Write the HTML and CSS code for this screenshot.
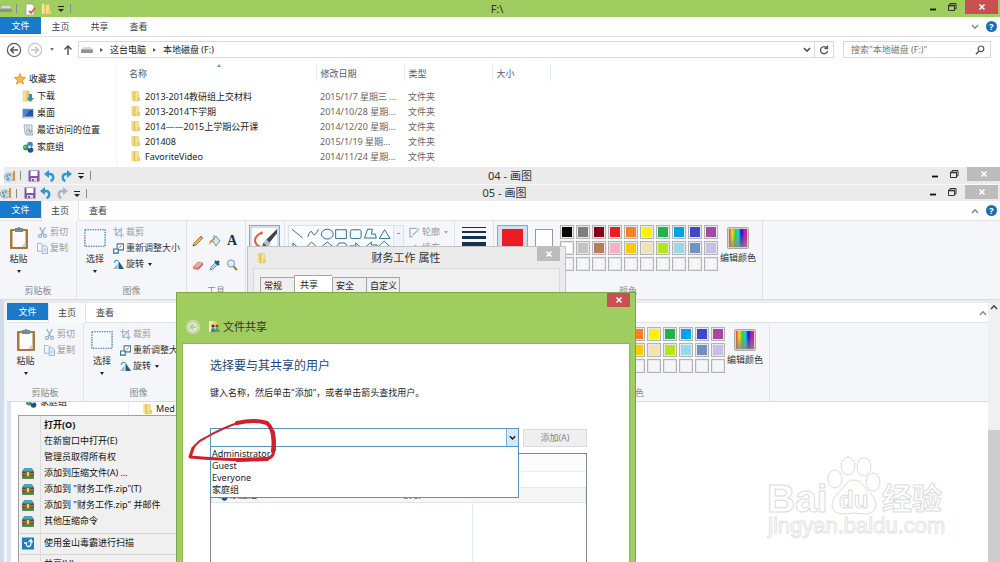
FILE: index.html
```html
<!DOCTYPE html>
<html lang="zh-CN">

<head>
    <meta charset="utf-8">
    <title>F:\</title>
    <meta name="viewport" content="width=device-width, initial-scale=1.0">
    <link rel="stylesheet" href="styles.css">
</head>

<body>
    <!-- icon sprites -->
    <svg class="sprites" width="0" height="0" aria-hidden="true">
        <defs>
            <linearGradient id="gold" x1="0" x2="1">
                <stop offset="0" stop-color="#fbf3b8" />
                <stop offset="1" stop-color="#e0bc50" />
            </linearGradient>
            <linearGradient id="rainbow" x1="0" x2="1">
                <stop offset="0" stop-color="#e0453a" />
                <stop offset=".18" stop-color="#f0e020" />
                <stop offset=".36" stop-color="#30d040" />
                <stop offset=".52" stop-color="#20d0d8" />
                <stop offset=".7" stop-color="#2018c8" />
                <stop offset=".85" stop-color="#b020c8" />
                <stop offset="1" stop-color="#e02060" />
            </linearGradient>
            <linearGradient id="fade" x1="0" x2="0" y1="0" y2="1">
                <stop offset=".3" stop-color="#888" stop-opacity="0" />
                <stop offset="1" stop-color="#888" stop-opacity=".75" />
            </linearGradient>
        </defs>
        <symbol id="i-folder" viewBox="0 0 12 12">
            <path d="M2 .5l4 1v10l-4-1z" fill="url(#gold)" />
            <path d="M6 1.500h3.500V11H6z" fill="#f5e39a" stroke="#dcbb5c" stroke-width=".5" />
            <path d="M8 7h3v4H8z" fill="#ebcf70" />
        </symbol>
        <symbol id="i-drive" viewBox="0 0 12 8">
            <path d="M2.500 1h7L12 4H0z" fill="#dadada" />
            <rect x="0" y="3.500" width="12" height="3.500" rx="1" fill="#909090" />
            <rect x="8.500" y="5" width="2" height="1" fill="#6ec25a" />
        </symbol>
        <symbol id="i-doc" viewBox="0 0 12 12">
            <path d="M2 1h6l2 2v9H2z" fill="#fff" stroke="#999" stroke-width=".7" />
            <path d="M5 8l2 2 4-5" fill="none" stroke="#e06030" stroke-width="1.800" />
        </symbol>
        <symbol id="i-star" viewBox="0 0 12 12">
            <path d="M6 .5l1.600 3.600 4 .4-3 2.700.9 3.900L6 9l-3.500 2.100.9-3.900-3-2.700 4-.4z" fill="#f8b84a" stroke="#d98620" stroke-width=".7" />
        </symbol>
        <symbol id="i-down" viewBox="0 0 12 12">
            <path d="M1 1h6v10H1z" fill="url(#gold)" stroke="#d5ae45" stroke-width=".5" />
            <path d="M7 4h3v4h2l-3.500 4L5 8h2z" fill="#2f8ad0" />
        </symbol>
        <symbol id="i-desktop" viewBox="0 0 12 12">
            <rect x="0" y="1.500" width="12" height="10" fill="#c4d0de" />
            <rect x="1" y="2.500" width="10" height="7" fill="#2356a8" />
            <path d="M1 2.500h7L3 9.500H1z" fill="#4c86cf" />
        </symbol>
        <symbol id="i-recent" viewBox="0 0 12 12">
            <path d="M2 1h8v8l1 2H4L3 9z" fill="#eef2f5" stroke="#8b98a2" stroke-width=".8" />
            <path d="M4 3h4M4 5h3" stroke="#8fa5b5" stroke-width=".7" />
            <circle cx="7" cy="7.500" r="2.600" fill="#d5e4ee" stroke="#7c93a5" stroke-width=".6" />
            <path d="M7 6v1.500h1.500" stroke="#456" stroke-width=".6" fill="none" />
        </symbol>
        <symbol id="i-home" viewBox="0 0 12 12">
            <circle cx="4" cy="6.500" r="3" fill="#3f9b58" />
            <circle cx="8" cy="3.500" r="2.800" fill="#3d83c8" />
            <circle cx="8.500" cy="9" r="2.800" fill="#1d4f94" />
            <circle cx="7.500" cy="6" r="1.400" fill="#e4f0f6" />
            <circle cx="3" cy="6" r="1" fill="#8ecf90" />
        </symbol>
        <symbol id="i-palette" viewBox="0 0 12 12">
            <ellipse cx="5" cy="7" rx="4.800" ry="4" fill="#b9dbe9" stroke="#6a9fb8" stroke-width=".7" />
            <circle cx="3" cy="6" r="1" fill="#d95a4a" />
            <circle cx="5.500" cy="5" r="1" fill="#58a55c" />
            <circle cx="4" cy="8.800" r="1" fill="#4470c8" />
            <path d="M9 1l2 0v10H9z" fill="#e69138" />
        </symbol>
        <symbol id="i-save" viewBox="0 0 12 12">
            <path d="M.5.5h11v11H.5z" fill="#7e57a8" />
            <path d="M2.500 1h7v5h-7z" fill="#fff" />
            <path d="M3 8h6v3H3z" fill="#e3d8ee" />
            <path d="M4 9h2v2H4z" fill="#7e57a8" />
        </symbol>
        <symbol id="i-undo" viewBox="0 0 12 12">
            <path d="M3 4h3.500a3.600 3.600 0 0 1 0 7" fill="none" stroke="currentColor" stroke-width="2.400" />
            <path d="M0 4L5 0v8z" fill="currentColor" />
        </symbol>
        <symbol id="i-chev" viewBox="0 0 8 6">
            <path d="M1 1l3 3.200L7 1" fill="none" stroke="currentColor" stroke-width="1.500" />
        </symbol>
        <symbol id="i-min" viewBox="0 0 10 10">
            <path d="M2 7.500h6" stroke="#111" stroke-width="1.800" />
        </symbol>
        <symbol id="i-restore" viewBox="0 0 10 10">
            <path d="M3 3V1.500h6V7H7.500" fill="none" stroke="#333" />
            <path d="M1.500 3.500h6v5h-6z" fill="none" stroke="#333" />
            <path d="M1 3.500h7" stroke="#333" stroke-width="1.600" />
        </symbol>
        <symbol id="i-x" viewBox="0 0 8 8">
            <path d="M1.500 1.500l5 5M6.500 1.500l-5 5" stroke="#fff" stroke-width="1.500" />
        </symbol>
        <symbol id="i-back" viewBox="0 0 16 16">
            <circle cx="8" cy="8" r="6.600" fill="none" stroke="currentColor" stroke-width="1.200" />
            <path d="M12 8H5M8 4.800L4.800 8 8 11.200" fill="none" stroke="currentColor" stroke-width="1.600" />
        </symbol>
        <symbol id="i-clip" viewBox="0 0 20 24">
            <rect x="1" y="3" width="18" height="20" rx="1" fill="#a9783c" />
            <path d="M3.500 5h13v16h-13z" fill="#fbfcfd" />
            <path d="M12 21l4.500-5v5z" fill="#c9d3dd" />
            <path d="M6 2h2.500a1.600 1.600 0 0 1 3 0H14v4H6z" fill="#788896" />
        </symbol>
        <symbol id="i-cut" viewBox="0 0 12 12">
            <path d="M3 0l4.500 8.500M9 0L4.500 8.500" stroke="#8fabc8" stroke-width="1.300" fill="none" />
            <circle cx="3.300" cy="9.600" r="1.700" fill="none" stroke="#8fabc8" stroke-width="1.200" />
            <circle cx="8.700" cy="9.600" r="1.700" fill="none" stroke="#8fabc8" stroke-width="1.200" />
        </symbol>
        <symbol id="i-copy" viewBox="0 0 12 12">
            <path d="M.5.5h4l2 2V9h-6z" fill="#f2f7fc" stroke="#9bb2cc" />
            <path d="M5.500 3h4l2 2v6.500h-6z" fill="#e6eff8" stroke="#9bb2cc" />
            <path d="M7 6.500h3M7 8.500h3" stroke="#9bb2cc" stroke-width=".7" />
        </symbol>
        <symbol id="i-select" viewBox="0 0 24 20">
            <rect x="1" y="1" width="22" height="18" fill="#f3f9fd" stroke="#29618d" stroke-width="1.200" stroke-dasharray="1.500 1.200" />
        </symbol>
        <symbol id="i-crop" viewBox="0 0 12 12">
            <path d="M3 0v9h9M0 3h9v9M3 9l7-8" fill="none" stroke="#9bb2c8" stroke-width="1.200" />
        </symbol>
        <symbol id="i-resize" viewBox="0 0 12 12">
            <path d="M4.500 1h7v6.500h-7z" fill="#fff" stroke="#4a7590" stroke-width="1.200" />
            <path d="M.7 6.500h5v4.500h-5z" fill="#fff" stroke="#2e6a8c" stroke-width="1.200" />
            <path d="M7 5l2.500-2" stroke="#4a7590" />
        </symbol>
        <symbol id="i-rotate" viewBox="0 0 12 12">
            <path d="M0 11h5V5z" fill="#9fb9c9" />
            <path d="M6 2v9h6z" fill="#17618f" />
            <path d="M1 4q2-4 5-2" fill="none" stroke="#3b9ac8" stroke-width="1.200" />
        </symbol>
        <symbol id="i-pencil" viewBox="0 0 12 12">
            <path d="M1 11l1-3 7-7 2 2-7 7z" fill="#e0b450" stroke="#7a5a2a" stroke-width=".6" />
            <path d="M9 1l2 2-1 1-2-2z" fill="#d67a6a" />
            <path d="M1 11l.5-1.500 1 1z" fill="#222" />
        </symbol>
        <symbol id="i-fill" viewBox="0 0 12 12">
            <path d="M3 5l4-4 4 5-4 5z" fill="#d4e4f0" stroke="#54789a" stroke-width=".8" />
            <path d="M4 5q-4-1-3.500 5Q2 7 5 6z" fill="#e09048" />
            <path d="M5 0v5" stroke="#54789a" stroke-width=".8" />
        </symbol>
        <symbol id="i-eraser" viewBox="0 0 12 12">
            <path d="M1 8l5-5 5 1-5 5z" fill="#f0a8a0" stroke="#c26a62" stroke-width=".6" />
            <path d="M1 8v2l5 1V9z" fill="#d97d75" />
            <path d="M6 9v2l5-5V4z" fill="#c7655f" />
        </symbol>
        <symbol id="i-dropper" viewBox="0 0 12 12">
            <path d="M1 11l1-3 4-4 2 2-4 4z" fill="#b8d4e8" stroke="#4a7ba0" stroke-width=".7" />
            <path d="M6 2l4 4M7.500 4.500L10 2" stroke="#1d4f86" stroke-width="2.400" />
        </symbol>
        <symbol id="i-lens" viewBox="0 0 12 12">
            <circle cx="5" cy="4.500" r="3.600" fill="#dceefa" stroke="#7790a8" />
            <path d="M7.500 7.500L11 11" stroke="#a5713c" stroke-width="2" />
        </symbol>
        <symbol id="i-brush" viewBox="0 0 24 24">
            <path d="M0 0h24v24H0z" fill="#fff" />
            <path d="M10 4q-8 4-7 9 1 4 5 5-5 1-6 5" fill="none" stroke="#df6038" stroke-width="2" />
            <circle cx="9" cy="5" r="1.200" fill="#df6038" />
            <path d="M24 1L13 12l3 3 8-10z" fill="#3b4550" />
            <path d="M14 11l4 4-3 3-4-4z" fill="#b5bec7" />
            <path d="M11 14l4 4q-3 5-8 4 3-3 4-8z" fill="#46586c" />
        </symbol>
        <symbol id="i-rainbow" viewBox="0 0 22 22">
            <rect x=".5" y=".5" width="21" height="21" rx="1" fill="#d8cfcb" stroke="#b3a5a0" />
            <rect x="2" y="2" width="18" height="18" fill="url(#rainbow)" />
            <rect x="2" y="2" width="18" height="18" fill="url(#fade)" />
        </symbol>
        <symbol id="i-rar" viewBox="0 0 12 12">
            <path d="M2 .5h8l2 3.500H0z" fill="#45a8b8" />
            <rect x="0" y="3.500" width="12" height="1.500" fill="#2f7f94" />
            <rect x="0" y="5" width="12" height="3" fill="#b5603a" />
            <rect x="0" y="8" width="12" height="3.500" rx="1" fill="#4a8a50" />
            <path d="M0 5h12M0 8h12" stroke="#463020" stroke-width=".7" />
            <rect x="4.500" y="4" width="3" height="5" fill="#f0cf58" stroke="#6b4a20" stroke-width=".5" />
        </symbol>
        <symbol id="i-scan" viewBox="0 0 12 12">
            <rect width="12" height="12" fill="#1d7fb8" />
            <path d="M2 5.500h2.500v1.500q0 2.500 2.500 2t2-5.500M6.500 4.500l2.500-2.500 1.500 3" fill="none" stroke="#fff" stroke-width="1.300" />
        </symbol>
        <symbol id="i-users" viewBox="0 0 12 12">
            <path d="M1 0h8l1 2v9H1z" fill="url(#gold)" />
            <circle cx="5" cy="5" r="1.500" fill="#333" />
            <circle cx="9" cy="5" r="1.500" fill="#7c4a30" />
            <path d="M3 11q0-4 2-4t2.500 4z" fill="#4078c0" />
            <path d="M7 11q0-4 2-4t3 4z" fill="#58a060" />
        </symbol>
    </svg>

    <div class="screen">

        <!-- Explorer window -->
        <section class="explorer">
            <div class="titlebar titlebar-green">
                <div class="quick">
                    <svg class="ico"><use href="#i-drive" /></svg>
                    <i class="bar"></i>
                    <svg class="ico"><use href="#i-doc" /></svg>
                    <svg class="ico"><use href="#i-folder" /></svg>
                    <i class="drop"></i>
                    <i class="bar"></i>
                </div>
                <h1 class="title">F:\</h1>
                <div class="controls">
                    <button aria-label="最小化"><svg><use href="#i-min" /></svg></button>
                    <button aria-label="还原"><svg><use href="#i-restore" /></svg></button>
                    <button class="close close-red" aria-label="关闭"><svg><use href="#i-x" /></svg></button>
                </div>
            </div>
            <nav class="tabs">
                <button class="tab tab-file">文件</button>
                <button class="tab">主页</button>
                <button class="tab">共享</button>
                <button class="tab">查看</button>
                <div class="tabs-end">
                    <svg class="chev"><use href="#i-chev" /></svg>
                    <span class="help">?</span>
                </div>
            </nav>
            <div class="address-row">
                <button class="nav-btn" aria-label="后退"><svg><use href="#i-back" /></svg></button>
                <button class="nav-btn nav-off" aria-label="前进"><svg class="flip"><use href="#i-back" /></svg></button>
                <i class="drop drop-grey"></i>
                <svg class="up" viewBox="0 0 10 12"><path d="M5 11V2M1.500 5.500L5 2l3.500 3.500" fill="none" stroke="#555" stroke-width="1.500" /></svg>
                <div class="address">
                    <svg class="ico"><use href="#i-drive" /></svg>
                    <i class="crumb"></i>
                    <a href="#">这台电脑</a>
                    <i class="crumb"></i>
                    <a href="#">本地磁盘 (F:)</a>
                    <svg class="chev chev-dark"><use href="#i-chev" /></svg>
                    <button class="refresh" aria-label="刷新"><svg viewBox="0 0 10 10"><path d="M8 3A3.600 3.600 0 1 0 8.600 6M8.500.5v3h-3" fill="none" stroke="#555" stroke-width="1.300" /></svg></button>
                </div>
                <div class="search">
                    <input type="text" aria-label="搜索" placeholder='搜索"本地磁盘 (F:)"'>
                    <svg viewBox="0 0 10 10"><circle cx="6" cy="3.800" r="2.800" fill="none" stroke="#555" stroke-width="1.200" /><path d="M4 6L1 9.200" stroke="#555" stroke-width="1.500" /></svg>
                </div>
            </div>
            <div class="explorer-body">
                <ul class="side">
                    <li class="side-head"><svg class="ico"><use href="#i-star" /></svg>收藏夹</li>
                    <li><svg class="ico"><use href="#i-down" /></svg>下载</li>
                    <li><svg class="ico"><use href="#i-desktop" /></svg>桌面</li>
                    <li><svg class="ico"><use href="#i-recent" /></svg>最近访问的位置</li>
                    <li><svg class="ico"><use href="#i-home" /></svg>家庭组</li>
                </ul>
                <table class="files">
                    <thead>
                        <tr><th class="c-name">名称<i class="sort"></i></th><th class="c-date">修改日期</th><th class="c-type">类型</th><th class="c-size">大小</th></tr>
                    </thead>
                    <tbody>
                        <tr><td><svg class="ico"><use href="#i-folder" /></svg>2013-2014教研组上交材料</td><td>2015/1/7 星期三 ...</td><td>文件夹</td><td></td></tr>
                        <tr><td><svg class="ico"><use href="#i-folder" /></svg>2013-2014下学期</td><td>2014/10/28 星期...</td><td>文件夹</td><td></td></tr>
                        <tr><td><svg class="ico"><use href="#i-folder" /></svg>2014——2015上学期公开课</td><td>2014/12/20 星期...</td><td>文件夹</td><td></td></tr>
                        <tr><td><svg class="ico"><use href="#i-folder" /></svg>201408</td><td>2015/1/19 星期...</td><td>文件夹</td><td></td></tr>
                        <tr><td><svg class="ico"><use href="#i-folder" /></svg>FavoriteVideo</td><td>2014/11/24 星期...</td><td>文件夹</td><td></td></tr>
                    </tbody>
                </table>
            </div>
        </section>

        <!-- Paint 04, only its title bar shows -->
        <div class="titlebar titlebar-04">
            <div class="quick">
                <svg class="ico"><use href="#i-palette" /></svg>
                <i class="bar"></i>
                <svg class="ico"><use href="#i-save" /></svg>
                <svg class="ico undo"><use href="#i-undo" /></svg>
                <svg class="ico undo flip"><use href="#i-undo" /></svg>
                <i class="drop"></i>
                <i class="bar"></i>
            </div>
            <h2 class="title">04 - 画图</h2>
            <div class="controls">
                <button aria-label="最小化"><svg><use href="#i-min" /></svg></button>
                <button aria-label="还原"><svg><use href="#i-restore" /></svg></button>
                <button class="close" aria-label="关闭"><svg><use href="#i-x" /></svg></button>
            </div>
        </div>

        <!-- Paint 05 -->
        <section class="paint">
            <div class="titlebar titlebar-05">
                <div class="quick">
                    <svg class="ico"><use href="#i-palette" /></svg>
                    <i class="bar"></i>
                    <svg class="ico"><use href="#i-save" /></svg>
                    <svg class="ico undo"><use href="#i-undo" /></svg>
                    <svg class="ico undo undo-off flip"><use href="#i-undo" /></svg>
                    <i class="drop"></i>
                    <i class="bar"></i>
                </div>
                <h2 class="title">05 - 画图</h2>
                <div class="controls">
                    <button aria-label="最小化"><svg><use href="#i-min" /></svg></button>
                    <button aria-label="还原"><svg><use href="#i-restore" /></svg></button>
                    <button class="close" aria-label="关闭"><svg><use href="#i-x" /></svg></button>
                </div>
            </div>
            <nav class="tabs">
                <button class="tab tab-file">文件</button>
                <button class="tab tab-on">主页</button>
                <button class="tab">查看</button>
                <div class="tabs-end">
                    <svg class="chev flip-v"><use href="#i-chev" /></svg>
                    <span class="help">?</span>
                </div>
            </nav>
            <div class="ribbon">
                <div class="group g-clip">
                    <div class="tools">
                        <button class="big"><svg class="i-big"><use href="#i-clip" /></svg>粘贴<i class="drop"></i></button>
                        <div class="stack">
                            <button class="small off"><svg class="ico"><use href="#i-cut" /></svg>剪切</button>
                            <button class="small off"><svg class="ico"><use href="#i-copy" /></svg>复制</button>
                        </div>
                    </div>
                    <div class="caption">剪贴板</div>
                </div>
                <div class="group g-image">
                    <div class="tools">
                        <button class="big"><svg class="i-big"><use href="#i-select" /></svg>选择<i class="drop"></i></button>
                        <div class="stack">
                            <button class="small off"><svg class="ico"><use href="#i-crop" /></svg>裁剪</button>
                            <button class="small"><svg class="ico"><use href="#i-resize" /></svg>重新调整大小</button>
                            <button class="small"><svg class="ico"><use href="#i-rotate" /></svg>旋转<i class="drop"></i></button>
                        </div>
                    </div>
                    <div class="caption">图像</div>
                </div>
                <div class="group g-tools">
                    <div class="tool-grid">
                        <svg><use href="#i-pencil" /></svg>
                        <svg><use href="#i-fill" /></svg>
                        <span class="letter">A</span>
                        <svg><use href="#i-eraser" /></svg>
                        <svg><use href="#i-dropper" /></svg>
                        <svg><use href="#i-lens" /></svg>
                    </div>
                    <div class="caption">工具</div>
                </div>
                <div class="group g-brush">
                    <button class="brush" aria-label="刷子"><svg><use href="#i-brush" /></svg></button>
                </div>
                <div class="group g-shapes">
                    <div class="shapes">
                        <svg viewBox="0 0 104 32" fill="#f2fafd" stroke="#356c88">
                            <path d="M1 3l11 9M17 11q3-9 5-4t6-4" fill="none" />
                            <ellipse cx="37" cy="8" rx="6" ry="5" />
                            <path d="M45.500 3.500h11v9h-11z" />
                            <rect x="60.500" y="3.500" width="11" height="9" rx="2" />
                            <path d="M78 3h5l-1 5h4l1 4H75zM90 12.500l5.500-9 5.500 9z" />
                            <path d="M2 17v9h10zM21 16l6 6-6 6-6-6zM37 16l6 5-2 6h-8l-2-6zM46 21l3-4h6l3 4-3 5h-6zM60 20h6v-3l6 5-6 5v-3h-6zM76 21l6-5v3h6v5h-6v3zM95 15l6 6h-3v6h-6v-6h-3z" />
                        </svg>
                        <i class="shapes-bar"></i>
                    </div>
                    <div class="stack">
                        <button class="small off"><svg class="ico" viewBox="0 0 12 12"><path d="M1 1.500h8M1 1v10l3-.5M4 9l7-7" fill="none" stroke="#a2b4c4" stroke-width="1.400" /></svg>轮廓<i class="drop"></i></button>
                        <button class="small off"><svg class="ico" viewBox="0 0 12 12"><path d="M2 7l5-5 4 4-4 5z" fill="#c9d5df" stroke="#a2b4c4" /></svg>填充<i class="drop"></i></button>
                    </div>
                </div>
                <div class="group g-size">
                    <i class="line w1"></i><i class="line w2"></i><i class="line w3"></i><i class="line w4"></i>
                </div>
                <div class="group g-colors">
                    <div class="tools">
                        <button class="color-one" aria-label="颜色 1"></button>
                        <button class="color-two" aria-label="颜色 2"></button>
                        <div class="palette"></div>
                        <button class="big edit"><svg class="i-big"><use href="#i-rainbow" /></svg>编辑颜色</button>
                    </div>
                    <div class="caption">颜色</div>
                </div>
            </div>

            <div class="canvas">
                <!-- earlier capture pasted on the canvas -->
                <div class="pasted">
                    <nav class="tabs">
                        <button class="tab tab-file">文件</button>
                        <button class="tab tab-on">主页</button>
                        <button class="tab">查看</button>
                        <div class="tabs-end">
                            <svg class="chev flip-v"><use href="#i-chev" /></svg>
                        </div>
                    </nav>
                    <div class="ribbon">
                        <div class="group g-clip">
                            <div class="tools">
                                <button class="big"><svg class="i-big"><use href="#i-clip" /></svg>粘贴<i class="drop"></i></button>
                                <div class="stack">
                                    <button class="small off"><svg class="ico"><use href="#i-cut" /></svg>剪切</button>
                                    <button class="small off"><svg class="ico"><use href="#i-copy" /></svg>复制</button>
                                </div>
                            </div>
                            <div class="caption">剪贴板</div>
                        </div>
                        <div class="group g-image">
                            <div class="tools">
                                <button class="big"><svg class="i-big"><use href="#i-select" /></svg>选择<i class="drop"></i></button>
                                <div class="stack">
                                    <button class="small off"><svg class="ico"><use href="#i-crop" /></svg>裁剪</button>
                                    <button class="small"><svg class="ico"><use href="#i-resize" /></svg>重新调整大小</button>
                                    <button class="small"><svg class="ico"><use href="#i-rotate" /></svg>旋转<i class="drop"></i></button>
                                </div>
                            </div>
                            <div class="caption">图像</div>
                        </div>
                        <div class="group g-tools"></div>
                        <div class="group g-brush"></div>
                        <div class="group g-shapes"></div>
                        <div class="group g-size"></div>
                        <div class="group g-colors">
                            <div class="tools">
                                <button class="color-one" aria-label="颜色 1"></button>
                                <button class="color-two" aria-label="颜色 2"></button>
                                <div class="palette"></div>
                                <button class="big edit"><svg class="i-big"><use href="#i-rainbow" /></svg>编辑颜色</button>
                            </div>
                            <div class="caption">颜色</div>
                        </div>
                    </div>
                    <div class="pasted-body">
                        <div class="under">
                            <div class="under-side"><svg class="ico"><use href="#i-home" /></svg>家庭组</div>
                            <div class="under-file"><svg class="ico"><use href="#i-folder" /></svg>Med</div>
                        </div>
                        <ul class="menu">
                            <li class="strong">打开(O)</li>
                            <li>在新窗口中打开(E)</li>
                            <li>管理员取得所有权</li>
                            <li><svg class="ico"><use href="#i-rar" /></svg>添加到压缩文件(A) ...</li>
                            <li><svg class="ico"><use href="#i-rar" /></svg>添加到 "财务工作.zip"(T)</li>
                            <li><svg class="ico"><use href="#i-rar" /></svg>添加到 "财务工作.zip" 并邮件</li>
                            <li><svg class="ico"><use href="#i-rar" /></svg>其他压缩命令</li>
                            <li class="ruled"><svg class="ico"><use href="#i-scan" /></svg>使用金山毒霸进行扫描</li>
                            <li class="ruled">共享(H)</li>
                        </ul>
                    </div>
                </div>
                <div class="scroll">
                    <svg class="chev flip-v"><use href="#i-chev" /></svg>
                    <div class="thumb"></div>
                </div>
            </div>
        </section>

        <!-- Folder properties -->
        <section class="props">
            <div class="props-title">
                <svg class="ico"><use href="#i-folder" /></svg>
                <h2 class="title">财务工作 属性</h2>
                <button class="close" aria-label="关闭"><svg><use href="#i-x" /></svg></button>
            </div>
            <div class="props-body">
                <button class="ptab">常规</button>
                <button class="ptab ptab-on">共享</button>
                <button class="ptab">安全</button>
                <button class="ptab">自定义</button>
            </div>
        </section>

        <!-- File sharing dialog -->
        <section class="share">
            <div class="share-head">
                <button class="close close-red" aria-label="关闭"><svg><use href="#i-x" /></svg></button>
                <div class="share-name">
                    <svg class="share-back"><use href="#i-back" /></svg>
                    <svg class="ico"><use href="#i-users" /></svg>
                    <h2 class="title">文件共享</h2>
                </div>
            </div>
            <div class="share-body">
                <h3>选择要与其共享的用户</h3>
                <label for="user">键入名称，然后单击"添加"，或者单击箭头查找用户。</label>
                <div class="pick-row">
                    <div class="combo">
                        <select id="user">
                            <option></option>
                        </select>
                        <span class="combo-arrow"><svg class="chev"><use href="#i-chev" /></svg></span>
                        <ul class="options">
                            <li>Administrator</li>
                            <li>Guest</li>
                            <li>Everyone</li>
                            <li>家庭组</li>
                        </ul>
                    </div>
                    <button class="add" disabled>添加(A)</button>
                </div>
                <div class="people">
                    <div class="people-head"></div>
                    <div class="people-row"><span><svg class="ico"><use href="#i-home" /></svg>家庭组</span><span>读取</span></div>
                </div>
            </div>
        </section>

        <!-- red pen mark -->
        <svg class="mark" viewBox="0 0 94 46" fill="none" stroke="#cf202c" stroke-linecap="round" stroke-linejoin="round">
            <path d="M3 39Q6 25 18 20Q37 9 54 4" stroke-width="2" />
            <path d="M50 5Q68 1 80 5Q86 10 87 24L86 33" stroke-width="4" />
            <path d="M86 32Q88 38 80 41Q50 43 3 39L6 30" stroke-width="3" />
            <path d="M86 14L87 32M50 42L80 41" stroke-width="4" />
        </svg>

        <!-- watermark -->
        <svg class="logo" viewBox="0 0 190 90" fill="#fff" stroke="#dcdcdc" stroke-width="1">
            <ellipse cx="73" cy="30" rx="7" ry="9" />
            <ellipse cx="86" cy="17" rx="7" ry="9" />
            <ellipse cx="102" cy="18" rx="7" ry="9" />
            <ellipse cx="111" cy="33" rx="7" ry="9" />
            <path d="M92 31q7 0 11 8 11 9 11 17-1 9-11 9-10-2-22 0-10 0-11-9 0-7 11-17 4-8 11-8z" />
            <text x="5" y="63" class="logo-big">Bai</text>
            <text x="77" y="59" class="logo-du">du</text>
            <text x="120" y="60" class="logo-cn">经验</text>
            <text x="6" y="84" class="logo-url">jingyan.baidu.com</text>
        </svg>
    </div>

    <script src="script.js"></script>
</body>

</html>
```

FILE: styles.css
```css
* {
    box-sizing: border-box;
}

body {
    margin: 0;
    font-family: "Noto Sans", "Noto Sans CJK SC", sans-serif;
    font-size: 9px;
    line-height: 14px;
    color: #222;
    background-color: #fff;
}

button,
input,
select {
    font: inherit;
    color: inherit;
    margin: 0;
    padding: 0;
    border: none;
    background: none;
}

button {
    white-space: nowrap;
}

h1,
h2,
h3,
ul {
    margin: 0;
    padding: 0;
    font-weight: normal;
    list-style: none;
}

a {
    color: inherit;
    text-decoration: none;
}

svg {
    display: block;
    flex: none;
}

.sprites {
    position: absolute;
}

.screen {
    position: relative;
    display: flex;
    flex-direction: column;
    height: 100vh;
    overflow: hidden;
}

.ico {
    width: 12px;
    height: 12px;
}

.flip {
    transform: scaleX(-1);
}

.flip-v {
    transform: scaleY(-1);
}

.drop {
    flex: none;
    width: 0;
    border: 2px solid transparent;
    border-top: 3px solid #222;
    border-bottom: none;
}

.drop-grey {
    border-top-color: #777;
}

.chev {
    width: 8px;
    height: 6px;
    color: #888;
}

/* title bars */
.titlebar {
    display: flex;
    flex: none;
    position: relative;
    align-items: center;
    justify-content: space-between;
    background-color: #ebebeb;
}

.titlebar-green {
    height: 17px;
    background-color: #a0cd5f;
    padding-right: 2px;
}

.titlebar-04 {
    height: 18px;
    margin-left: 4px;
    border-bottom: 1px solid #f8f8f8;
}

.titlebar-05 {
    height: 16px;
    padding-right: 2px;
}

.title {
    font-size: 11px;
    line-height: 16px;
    color: #333;
}

.titlebar .title {
    position: absolute;
    left: 0;
    right: 6px;
    text-align: center;
}

.titlebar-04 .title {
    right: -16px;
}

.titlebar-05 .title {
    right: -9px;
}

.quick {
    display: flex;
    align-items: center;
    gap: 4px;
    height: 16px;
}

.quick .bar {
    width: 1px;
    height: 9px;
    margin-right: 3px;
    background-color: #8b8b8b;
}

.quick .drop {
    border-left-width: 3px;
    border-right-width: 3px;
    margin: 4px 2px 0;
    position: relative;
}

.quick .drop::before {
    content: "";
    position: absolute;
    top: -6px;
    left: -3px;
    width: 6px;
    height: 1px;
    background-color: #222;
}

.undo {
    color: #2f97d4;
}

.undo-off {
    color: #a7b5c6;
}

.controls {
    display: flex;
    position: relative;
    align-self: flex-start;
}

.controls button {
    width: 19px;
    height: 14px;
    display: flex;
    align-items: center;
    justify-content: center;
}

.controls svg {
    width: 10px;
    height: 10px;
}

.controls .close {
    width: 33px;
    margin-left: 4px;
}

.close {
    display: flex;
    align-items: center;
    justify-content: center;
    background-color: #bcbcbc;
}

.controls .close svg,
.close svg {
    width: 8px;
    height: 8px;
}

.controls .close-red,
.close-red {
    background-color: #c75050;
}

/* ribbon tabs */
.tabs {
    display: flex;
    flex: none;
    height: 20px;
    background-color: #fff;
    border-bottom: 1px solid #dfe2e6;
}

.tab {
    width: 38px;
    line-height: 18px;
    color: #444;
}

.tab-file {
    width: 41px;
    height: 17px;
    line-height: 17px;
    color: #fff;
    background-color: #1979ca;
}

.tab-on {
    height: 20px;
    border: 1px solid #dfe2e6;
    border-width: 0 1px;
    background-color: #f9fafb;
}

.tabs-end {
    display: flex;
    align-items: center;
    gap: 7px;
    margin-left: auto;
    padding-right: 3px;
}

.help {
    width: 11px;
    height: 11px;
    border-radius: 6px;
    line-height: 11px;
    font-weight: bold;
    text-align: center;
    color: #fff;
    background-color: #1c6fb5;
}

/* explorer */
.explorer {
    flex: none;
}

.explorer .tab:not(.tab-file) {
    width: 39px;
}

.address-row {
    display: flex;
    align-items: center;
    height: 26px;
    padding: 0 9px 1px 6px;
}

.nav-btn {
    width: 16px;
    height: 16px;
    margin-right: 5px;
    color: #555;
}

.nav-btn svg {
    width: 16px;
    height: 16px;
}

.nav-off {
    color: #c5c5c5;
    margin-right: 7px;
}

.up {
    width: 10px;
    height: 12px;
    margin: 0 5px 0 9px;
}

.address {
    display: flex;
    flex: 1;
    align-items: center;
    height: 17px;
    padding-left: 2px;
    border: 1px solid #d9d9d9;
    color: #222;
}

.address .crumb {
    border: 2px solid transparent;
    border-left: 3px solid #555;
    border-right: none;
    margin: 0 7px;
}

.address .chev {
    margin-left: auto;
    color: #444;
}

.refresh {
    width: 19px;
    height: 15px;
    margin-left: 3px;
    padding: 0 4px;
    border-left: 1px solid #d9d9d9;
}

.refresh svg {
    width: 10px;
    height: 10px;
}

.search {
    display: flex;
    align-items: center;
    width: 148px;
    height: 17px;
    margin-left: 9px;
    padding: 0 5px 0 7px;
    border: 1px solid #d9d9d9;
}

.search input {
    flex: 1;
    min-width: 0;
    height: 15px;
    outline: none;
}

.search input::placeholder {
    color: #777;
}

.search svg {
    width: 10px;
    height: 10px;
}

.explorer-body {
    display: flex;
    height: 104px;
}

.side {
    width: 117px;
    padding: 7px 0 0 22px;
    border-right: 1px solid #f2f5f8;
}

.side li {
    display: flex;
    align-items: center;
    gap: 3px;
    height: 17px;
    white-space: nowrap;
}

.side .side-head {
    margin-left: -8px;
}

.files {
    border-collapse: collapse;
    align-self: flex-start;
    margin-left: 12px;
    table-layout: fixed;
    width: 422px;
}

.files th {
    height: 18px;
    padding: 3px 0 0 4px;
    border-right: 1px solid #e3eef5;
    text-align: left;
    font-weight: normal;
    color: #4c607a;
}

.files .c-name {
    width: 187px;
    padding-left: 0;
    position: relative;
}

.c-date,
.c-type {
    width: 88px;
}

.sort {
    position: absolute;
    top: 1px;
    left: 88px;
    border: 2px solid transparent;
    border-top: none;
    border-bottom: 3px solid #5b9cc4;
}

.files td {
    height: 15px;
    padding: 0 0 0 4px;
    line-height: 15px;
    color: #666;
    white-space: nowrap;
}

.files tbody:before {
    content: "";
    display: block;
    height: 8px;
}

.files td:first-child {
    padding-left: 0;
    color: #222;
}

.files td .ico {
    float: left;
    margin: 1px 4px 0 0;
}

/* paint */
.paint {
    display: flex;
    flex: 1;
    flex-direction: column;
    min-height: 0;
}

.ribbon {
    display: flex;
    flex: none;
    height: 79px;
    background-color: #f4f6f9;
    border-bottom: 1px solid #d8dbe0;
}

.group {
    display: flex;
    flex: none;
    flex-direction: column;
    justify-content: space-between;
    position: relative;
    padding: 4px 0 1px;
    border-right: 1px solid #e0e3e8;
}

.g-clip {
    width: 77px;
}

.g-image {
    width: 110px;
}

.g-tools {
    width: 59px;
}

.g-brush {
    width: 39px;
    padding-left: 3px;
}

.ribbon .g-shapes {
    width: 170px;
    padding-left: 3px;
    flex-direction: row;
    justify-content: flex-start;
    gap: 5px;
}

.ribbon .g-size {
    width: 39px;
    padding: 6px 7px 0;
    justify-content: flex-start;
    gap: 3px;
}

.g-colors {
    width: 269px;
}

.tools {
    display: flex;
    align-items: flex-start;
}

.caption {
    text-align: center;
    color: #8a8a8a;
}

.big {
    display: flex;
    flex-direction: column;
    align-items: center;
    width: 37px;
    padding-top: 1px;
    color: #333;
}

.g-image .big {
    width: 36px;
}

.big .i-big {
    width: 22px;
    height: 24px;
    margin-bottom: 2px;
}

.big .drop {
    margin-top: 4px;
}

.stack {
    display: flex;
    flex-direction: column;
    align-items: flex-start;
    gap: 2px;
}

.small {
    display: flex;
    align-items: center;
    gap: 2px;
    height: 14px;
    color: #333;
}

.off {
    color: #999;
}

.off .drop {
    border-top-color: #aaa;
}

.small .drop {
    margin-left: 2px;
}

.small .ico {
    width: 11px;
    height: 11px;
}

.tool-grid {
    display: grid;
    grid-template-columns: repeat(3, 12px);
    gap: 12px 5px;
    padding: 10px 0 0 5px;
}

.tool-grid svg {
    width: 12px;
    height: 12px;
}

.letter {
    font: bold 14px/12px "Liberation Serif", serif;
    color: #1c2f4a;
    text-align: center;
}

.brush {
    display: flex;
    align-items: flex-start;
    width: 31px;
    height: 40px;
    padding: 2px;
    border: 1px solid #7fa8d6;
    background-color: #cfe0f3;
}

.brush svg {
    width: 25px;
    height: 25px;
}

.shapes {
    display: flex;
    justify-content: space-between;
    width: 116px;
    height: 50px;
    padding: 0 0 0 2px;
    border: 1px solid #dbe2ea;
    background-color: #fbfcfe;
}

.shapes svg {
    width: 102px;
    height: 32px;
}

.shapes-bar {
    width: 10px;
    border-left: 1px solid #dbe2ea;
    background: linear-gradient(#999, #999) 3px 7px / 3px 1px no-repeat #f0f3f7;
}

.line {
    background-color: #17314f;
}

.w1 {
    height: 1px;
}

.w2 {
    height: 2px;
}

.w3 {
    height: 3px;
}

.w4 {
    height: 4px;
}

.color-one,
.color-two {
    flex: none;
    width: 31px;
    height: 40px;
    margin-left: 3px;
    border: 1px solid #7fa8d6;
    background: linear-gradient(#eb1c24, #eb1c24) center 3px / 21px 20px no-repeat #cfe0f3;
}

.color-two {
    width: 18px;
    height: 20px;
    margin: 4px 7px 0;
    border-color: #999;
    background: #fff;
}

.palette {
    display: grid;
    grid-template-columns: repeat(10, 14px);
    gap: 2px;
}

.swatch {
    height: 14px;
    border: 1px solid #b4b4b4;
    box-shadow: inset 0 0 0 1px #e8e8e8;
}

.g-colors .edit {
    width: 40px;
    padding-top: 2px;
}

.edit .i-big {
    width: 22px;
    height: 22px;
}

/* canvas of paint 05 */
.canvas {
    display: flex;
    flex: 1;
    min-height: 0;
    padding-top: 3px;
    border-left: 4px solid #d0dbec;
    background-color: #e9ebee;
}

.pasted {
    display: flex;
    flex: 1;
    flex-direction: column;
    min-width: 0;
    border-left: 3px solid #f1f5fa;
    background-color: #fff;
}

.pasted .tabs-end {
    padding-right: 1px;
}

.pasted-body {
    flex: 1;
    min-height: 0;
    padding-left: 7px;
    border-left: 4px solid #dde5f1;
}

.under {
    display: flex;
    height: 13px;
    overflow: hidden;
}

.under-side,
.under-file {
    display: flex;
    align-items: center;
    gap: 3px;
    padding-left: 7px;
}

.under-side {
    width: 110px;
    height: 13px;
    margin-top: -7px;
}

.under-file {
    padding-left: 12px;
    border-left: 1px solid #eef2f6;
}

.menu {
    width: 200px;
    border: 1px solid #a0a0a0;
    padding: 1px 0;
    background: linear-gradient(90deg, #f0f0f0 21px, #dcdcdc 21px, #dcdcdc 22px, #f0f0f0 22px);
}

.menu li {
    display: flex;
    align-items: center;
    position: relative;
    height: 16px;
    padding-left: 25px;
    white-space: nowrap;
    color: #111;
}

.menu .ico {
    position: absolute;
    left: 3px;
    height: 13px;
}

.menu .strong {
    font-weight: bold;
}

.menu .ruled {
    height: 21px;
    border-top: 1px solid #d5d5d5;
    margin-top: 4px;
    padding-bottom: 2px;
}

.menu .ruled + .ruled {
    margin-top: 0;
}

.scroll {
    display: flex;
    flex-direction: column;
    align-items: center;
    justify-content: space-between;
    width: 12px;
    padding-top: 1px;
    background-color: #f0f0f0;
}

.scroll .chev {
    color: #444;
}

.thumb {
    width: 12px;
    height: 51%;
    background-color: #cdcdcd;
}

/* properties window */
.props {
    position: absolute;
    top: 246px;
    left: 247px;
    width: 319px;
    height: 60px;
    padding: 0 5px;
    border: 1px solid #c2c2c2;
    background-color: #ebebeb;
}

.props-title {
    display: flex;
    align-items: center;
    justify-content: space-between;
    height: 21px;
    padding-left: 2px;
}

.props-title .title {
    padding-left: 8px;
}

.props .close {
    width: 23px;
    height: 14px;
    align-self: flex-start;
}

.props-body {
    display: flex;
    align-items: flex-end;
    height: 26px;
    padding-left: 6px;
    border: 1px solid #d8d8d8;
    border-bottom: none;
    background-color: #f0f0f0;
}

.ptab {
    width: 34px;
    height: 17px;
    padding-left: 3px;
    border: 1px solid #a5a5a5;
    border-right: none;
    text-align: left;
    background-color: #efefef;
    color: #222;
}

.ptab-on {
    width: 38px;
    height: 19px;
    padding-left: 5px;
    background-color: #fff;
}

.ptab:last-child {
    border-right: 1px solid #a5a5a5;
}

/* sharing dialog */
.share {
    display: flex;
    flex-direction: column;
    position: absolute;
    top: 292px;
    bottom: 0;
    left: 176px;
    width: 460px;
    padding: 0 5px;
    border: 1px solid #7fa646;
    border-bottom: none;
    background-color: #a0cd5f;
}

.share-head {
    height: 50px;
    padding-left: 4px;
}

.share .close {
    width: 23px;
    height: 14px;
    margin-left: auto;
}

.share-name {
    display: flex;
    align-items: center;
    gap: 3px;
    height: 40px;
}

.share-back {
    width: 14px;
    height: 14px;
    margin-right: 5px;
    border-radius: 7px;
    color: #b3c79a;
    background-color: #dcebc6;
}

.share-body {
    flex: 1;
    padding: 14px 42px 0 27px;
    border: 1px solid #8fb854;
    border-bottom: none;
    background-color: #fff;
}

.share-body h3 {
    font-size: 12px;
    line-height: 16px;
    color: #1c4878;
}

.share-body label {
    display: block;
    margin-top: 12px;
    white-space: nowrap;
}

.pick-row {
    display: flex;
    align-items: center;
    justify-content: space-between;
    margin-top: 28px;
}

.combo {
    position: relative;
    width: 309px;
}

.combo select {
    display: block;
    width: 100%;
    height: 19px;
    padding: 0 18px 0 3px;
    border: 1px solid #5694b8;
    appearance: none;
    background-color: #fff;
}

.combo-arrow {
    display: flex;
    align-items: center;
    justify-content: center;
    position: absolute;
    top: 1px;
    right: 1px;
    width: 12px;
    height: 17px;
    border-left: 1px solid #7eb4d6;
    background-color: #d3e9f8;
    pointer-events: none;
}

.combo-arrow .chev {
    width: 7px;
    color: #111;
}

.options {
    position: absolute;
    top: 18px;
    left: 0;
    right: 0;
    padding: 1px 0 1px 1px;
    border: 1px solid #5694b8;
    background-color: #fff;
    line-height: 12px;
}

.add {
    width: 64px;
    height: 18px;
    border: 1px solid #dcdcdc;
    color: #888;
    background-color: #efefef;
}

.people {
    height: 120px;
    margin-top: 6px;
    border: 1px solid #828790;
    background: linear-gradient(#dcebf3, #dcebf3) 261px 0 / 1px 100% no-repeat;
}

.people-head {
    height: 18px;
    border-bottom: 1px solid #e8eef3;
    background-color: #fbfcfd;
}

.people-row {
    display: flex;
    align-items: center;
    height: 16px;
    margin-top: 15px;
    border: 1px solid #e3e6e8;
    background-color: #f5f6f6;
}

.people-row span {
    display: flex;
    align-items: center;
    gap: 2px;
    width: 262px;
    padding-left: 4px;
}

/* overlays */
.mark {
    position: absolute;
    top: 418px;
    left: 187px;
    width: 94px;
    height: 46px;
}

.logo {
    position: absolute;
    right: 48px;
    bottom: 23px;
    width: 190px;
    height: 90px;
    overflow: visible;
}

.logo text {
    font-family: "Liberation Sans", "Noto Sans CJK SC", sans-serif;
    font-weight: bold;
}

.logo .logo-big {
    font-size: 39px;
}

.logo .logo-du {
    font-size: 24px;
}

.logo .logo-cn {
    font-size: 30px;
}

.logo .logo-url {
    font-size: 22px;
    font-weight: normal;
    stroke: #e4e4e4;
}
```

FILE: script.js
```javascript
const colors = [
    '#000000', '#7f7f7f', '#880015', '#ed1c24', '#ff7f27', '#fff200', '#22b14c', '#00a2e8', '#3f48cc', '#a349a4',
    '#ffffff', '#c3c3c3', '#b97a57', '#ffaec9', '#ffc90e', '#efe4b0', '#b5e61d', '#99d9ea', '#7092be', '#c8bfe7'
];

// two rows of colors and one empty row
document.querySelectorAll('.palette').forEach(function (palette) {
    for (let i = 0; i < 30; i++) {
        const swatch = document.createElement('button');
        swatch.className = 'swatch';
        swatch.setAttribute('aria-label', colors[i] || 'empty');
        if (colors[i]) {
            swatch.style.backgroundColor = colors[i];
        }
        palette.appendChild(swatch);
    }
});
```
